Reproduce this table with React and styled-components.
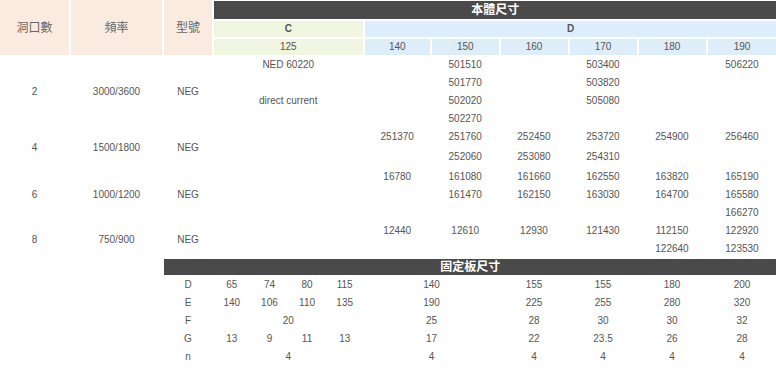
import React from 'react';
import styled, { createGlobalStyle } from 'styled-components';

const GlobalStyle = createGlobalStyle`
  html, body { margin: 0; padding: 0; background: #fff; overflow: hidden; }
  body { font-family: "Liberation Sans", Arial, "Noto Sans CJK TC", sans-serif; }
`;

const Sheet = styled.div`
  display: grid;
  grid-template-columns: 69px 91px 48px repeat(4, 35.625px) 65.5px 66.5px 67px 67px 67px 69px;
  grid-template-rows: 19px 16px 16px repeat(5, 16px) 20px repeat(5, 16px) 16px repeat(5, 16px);
  gap: 2px;
  width: 776.5px;
  font-size: 10px;
  color: #555;
`;

const Cell = styled.div`
  grid-column: ${(p) => p.$col} / span ${(p) => p.$span || 1};
  grid-row: ${(p) => p.$row} / span ${(p) => p.$rows || 1};
  display: flex;
  align-items: center;
  justify-content: center;
  white-space: nowrap;
  line-height: 1;
`;

const HeadCell = styled(Cell)`
  background: #f9ebdf;
  color: #666;
  font-size: 12px;
  font-family: "Liberation Sans", "Noto Sans CJK TC", sans-serif;
`;

const SectionBar = styled(Cell)`
  background: #4a4a4a;
  color: #fff;
  font-weight: bold;
  font-size: 12px;
  font-family: "Liberation Sans", "Noto Sans CJK TC", sans-serif;
  border-top: ${(p) => (p.$top ? '1px solid #fff' : 'none')};
`;

const GroupCell = styled(Cell)`
  background: ${(p) => (p.$tone === 'c' ? '#f1f6e1' : '#ddedfa')};
  font-weight: ${(p) => (p.$bold ? 'bold' : 'normal')};
  color: #555;
`;

const DataCell = styled(Cell)`
  color: #555;
`;

const COLS = {
  hole: [1, 1],
  freq: [2, 1],
  model: [3, 1],
  c125: [4, 4],
  d140: [8, 1],
  d150: [9, 1],
  d160: [10, 1],
  d170: [11, 1],
  d180: [12, 1],
  d190: [13, 1],
};

const bodyLines = [
  { c125: 'NED 60220', d150: '501510', d170: '503400', d190: '506220' },
  { d150: '501770', d170: '503820' },
  { c125: 'direct current', d150: '502020', d170: '505080' },
  { d150: '502270' },
  { d140: '251370', d150: '251760', d160: '252450', d170: '253720', d180: '254900', d190: '256460' },
  { d150: '252060', d160: '253080', d170: '254310' },
  { d140: '16780', d150: '161080', d160: '161660', d170: '162550', d180: '163820', d190: '165190' },
  { d150: '161470', d160: '162150', d170: '163030', d180: '164700', d190: '165580' },
  { d190: '166270' },
  { d140: '12440', d150: '12610', d160: '12930', d170: '121430', d180: '112150', d190: '122920' },
  { d180: '122640', d190: '123530' },
];

const groups = [
  { hole: '2', freq: '3000/3600', model: 'NEG', start: 0, lines: 4 },
  { hole: '4', freq: '1500/1800', model: 'NEG', start: 4, lines: 2 },
  { hole: '6', freq: '1000/1200', model: 'NEG', start: 6, lines: 3 },
  { hole: '8', freq: '750/900', model: 'NEG', start: 9, lines: 2 },
];

const sizeCols = ['d140', 'd150', 'd160', 'd170', 'd180', 'd190'];

const plateRows = [
  { label: 'D', small: ['65', '74', '80', '115'], rest: ['140', '155', '155', '180', '200'] },
  { label: 'E', small: ['140', '106', '110', '135'], rest: ['190', '225', '255', '280', '320'] },
  { label: 'F', small: ['20'], rest: ['25', '28', '30', '30', '32'] },
  { label: 'G', small: ['13', '9', '11', '13'], rest: ['17', '22', '23.5', '26', '28'] },
  { label: 'n', small: ['4'], rest: ['4', '4', '4', '4', '4'] },
];

const restCols = [
  [8, 2],
  [10, 1],
  [11, 1],
  [12, 1],
  [13, 1],
];

const BODY_FIRST_ROW = 4;
const PLATE_BAR_ROW = 15;

export default function App() {
  return (
    <>
      <GlobalStyle />
      <Sheet>
        <HeadCell $col={1} $row={1} $rows={3}>洞口數</HeadCell>
        <HeadCell $col={2} $row={1} $rows={3}>頻率</HeadCell>
        <HeadCell $col={3} $row={1} $rows={3}>型號</HeadCell>
        <SectionBar $col={4} $span={10} $row={1} $top>本體尺寸</SectionBar>
        <GroupCell $tone="c" $bold $col={4} $span={4} $row={2}>C</GroupCell>
        <GroupCell $tone="d" $bold $col={8} $span={6} $row={2}>D</GroupCell>
        <GroupCell $tone="c" $col={4} $span={4} $row={3}>125</GroupCell>
        {['140', '150', '160', '170', '180', '190'].map((v, i) => (
          <GroupCell key={v} $tone="d" $col={8 + i} $row={3}>{v}</GroupCell>
        ))}

        {groups.map((g) =>
          ['hole', 'freq', 'model'].map((k) => (
            <DataCell
              key={g.hole + k}
              $col={COLS[k][0]}
              $span={COLS[k][1]}
              $row={BODY_FIRST_ROW + g.start}
              $rows={g.lines}
            >
              {g[k]}
            </DataCell>
          ))
        )}

        {bodyLines.map((line, i) =>
          ['c125', ...sizeCols].map((k) =>
            line[k] ? (
              <DataCell key={i + k} $col={COLS[k][0]} $span={COLS[k][1]} $row={BODY_FIRST_ROW + i}>
                {line[k]}
              </DataCell>
            ) : null
          )
        )}

        <SectionBar $col={3} $span={11} $row={PLATE_BAR_ROW}>固定板尺寸</SectionBar>

        {plateRows.map((r, i) => {
          const row = PLATE_BAR_ROW + 1 + i;
          return (
            <React.Fragment key={r.label}>
              <DataCell $col={3} $row={row}>{r.label}</DataCell>
              {r.small.length === 1 ? (
                <DataCell $col={4} $span={4} $row={row}>{r.small[0]}</DataCell>
              ) : (
                r.small.map((v, j) => (
                  <DataCell key={j} $col={4 + j} $row={row}>{v}</DataCell>
                ))
              )}
              {r.rest.map((v, j) => (
                <DataCell key={'r' + j} $col={restCols[j][0]} $span={restCols[j][1]} $row={row}>
                  {v}
                </DataCell>
              ))}
            </React.Fragment>
          );
        })}
      </Sheet>
    </>
  );
}
